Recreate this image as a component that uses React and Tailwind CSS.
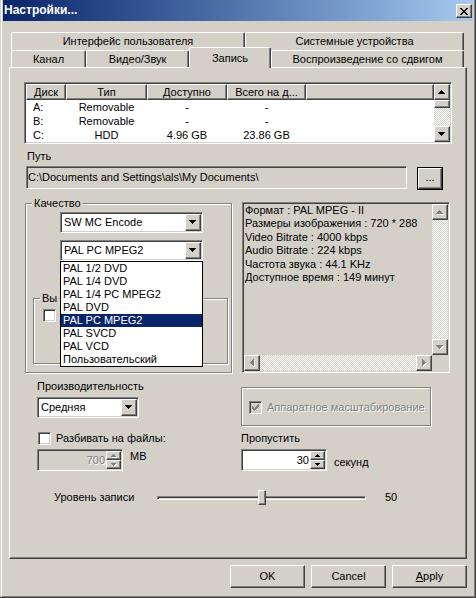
const raised =
  "border border-t-white border-l-white border-r-[#404040] border-b-[#404040] shadow-[inset_-1px_-1px_0_#808080]"
const sunken =
  "border border-t-[#808080] border-l-[#808080] border-r-white border-b-white shadow-[inset_1px_1px_0_#404040,inset_-1px_-1px_0_#d4d0c8]"
const etched = "border border-[#808080] shadow-[1px_1px_0_#fff,inset_1px_1px_0_#fff]"
const dither =
  "bg-[image:repeating-conic-gradient(#ffffff_0%_25%,#d4d0c8_0%_50%)] bg-[length:2px_2px]"
const grayText = "text-[#808080] [text-shadow:1px_1px_0_#fff]"

const Tri = ({ dir = "down", size = 7, disabled = false }) => {
  const s = size
  const h = Math.ceil(s / 2)
  const horiz = dir === "left" || dir === "right"
  const w = horiz ? h : s
  const ht = horiz ? s : h
  const pts = {
    down: `0,0 ${s},0 ${s / 2},${h}`,
    up: `${s / 2},0 ${s},${h} 0,${h}`,
    left: `${h},0 ${h},${s} 0,${s / 2}`,
    right: `0,0 ${h},${s / 2} 0,${s}`,
  }[dir]
  return (
    <svg width={w + 1} height={ht + 1} shapeRendering="crispEdges">
      {disabled && <polygon points={pts} fill="#fff" transform="translate(1,1)" />}
      <polygon points={pts} fill={disabled ? "#808080" : "#000"} />
    </svg>
  )
}

const Btn = ({ className = "", children }) => (
  <div className={`${raised} bg-[#d4d0c8] flex items-center justify-center shrink-0 ${className}`}>
    {children}
  </div>
)

const CheckMark = ({ color = "#000" }) => (
  <svg width="7" height="7" shapeRendering="crispEdges">
    <path
      fill={color}
      d="M6 0h1v1h-1z M5 1h2v1h-2z M0 2h1v1h-1z M4 2h3v1h-3z M0 3h2v1h-2z M3 3h3v1h-3z M0 4h5v1h-5z M1 5h3v1h-3z M2 6h1v1h-1z"
    />
  </svg>
)

const Check = ({ checked, disabled }) => (
  <div
    className={`${sunken} w-[13px] h-[13px] shrink-0 flex items-center justify-center ${
      disabled ? "bg-[#d4d0c8]" : "bg-white"
    }`}
  >
    {checked && <CheckMark color={disabled ? "#808080" : "#000"} />}
  </div>
)

const Combo = ({ value, className = "" }) => (
  <div className={`${sunken} bg-white h-[21px] flex items-stretch p-[1px] ${className}`}>
    <span className="flex-1 pl-[2px] self-center truncate">{value}</span>
    <Btn className="w-[16px]">
      <Tri />
    </Btn>
  </div>
)

const Spin = ({ value, disabled }) => (
  <div
    className={`${sunken} w-[86px] h-[22px] shrink-0 flex p-[1px] ${
      disabled ? "bg-[#d4d0c8]" : "bg-white"
    }`}
  >
    <span className={`flex-1 text-right pr-[1px] self-center ${disabled ? grayText : ""}`}>{value}</span>
    <div className="w-[15px] flex flex-col">
      <Btn className="flex-1">
        <Tri dir="up" size={5} disabled={disabled} />
      </Btn>
      <Btn className="flex-1">
        <Tri dir="down" size={5} disabled={disabled} />
      </Btn>
    </div>
  </div>
)

const Tab = ({ className = "", active, children }) => (
  <div
    className={`${className} ${
      active ? "h-[21px] -mb-[1px] relative z-10" : "h-full"
    } shrink-0 flex items-center justify-center bg-[#d4d0c8] border-t border-l border-r border-t-white border-l-white border-r-[#404040] shadow-[inset_-1px_0_0_#808080] rounded-t-[2px]`}
  >
    {children}
  </div>
)

const drives = [
  ["A:", "Removable", "-", "-"],
  ["B:", "Removable", "-", "-"],
  ["C:", "HDD", "4.96 GB", "23.86 GB"],
]

const formats = [
  "PAL 1/2 DVD",
  "PAL 1/4 DVD",
  "PAL 1/4 PC MPEG2",
  "PAL DVD",
  "PAL PC MPEG2",
  "PAL SVCD",
  "PAL VCD",
  "Пользовательский",
]

const info = [
  "Формат : PAL MPEG - II",
  "Размеры изображения : 720 * 288",
  "Video Bitrate : 4000 kbps",
  "Audio Bitrate : 224 kbps",
  "Частота звука : 44.1 KHz",
  "Доступное время : 149 минут",
]

export default function App() {
  return (
    <div className="w-[476px] h-[598px] bg-[#d4d0c8] border-r border-b border-[#404040] font-['Liberation_Sans',Arial,sans-serif] text-[11px] leading-[13px] text-black select-none">
      <div className="h-full ml-[1px] border-l border-r border-b border-l-white border-r-[#808080] border-b-[#808080] px-[1px] pb-[1px] flex flex-col">
        {/* title bar */}
        <div className="h-[21px] shrink-0 flex items-start bg-linear-to-r from-[#0a246a] to-[#a6caf0]">
          <span className="pl-[1px] pt-[3px] font-bold text-white text-[12px] leading-[14px]">Настройки...</span>
          <Btn className="ml-auto mt-[4px] mr-[1px] w-[16px] h-[14px]">
            <svg width="8" height="7" shapeRendering="crispEdges">
              <path d="M0 0H2L4 2.5L6 0H8L5 3.5L8 7H6L4 4.5L2 7H0L3 3.5Z" fill="#000" />
            </svg>
          </Btn>
        </div>

        {/* tabs */}
        <div className="mt-[11px] ml-[8px] flex h-[18px]">
          <Tab className="w-[234px]">Интерфейс пользователя</Tab>
          <Tab className="w-[219px]">Системные устройства</Tab>
        </div>
        <div className="ml-[8px] flex items-end h-[17px]">
          <Tab className="w-[75px]">Канал</Tab>
          <Tab className="w-[103px]">Видео/Звук</Tab>
          <Tab className="w-[82px]" active>
            Запись
          </Tab>
          <Tab className="w-[193px]">Воспроизведение со сдвигом</Tab>
        </div>

        {/* panel */}
        <div className="ml-[6px] w-[458px] h-[492px] shrink-0 border border-t-white border-l-white border-r-[#404040] border-b-[#404040] shadow-[inset_-1px_-1px_0_#808080] flex flex-col">
          {/* drive list */}
          <div className={`${sunken} ml-[14px] mt-[14px] w-[428px] h-[62px] bg-white flex p-[1px]`}>
            <div className="flex-1 flex flex-col">
              <div className="flex h-[16px]">
                <Btn className="w-[40px]">Диск</Btn>
                <Btn className="w-[81px]">Тип</Btn>
                <Btn className="w-[80px]">Доступно</Btn>
                <Btn className="w-[79px]">Всего на д...</Btn>
                <Btn className="flex-1" />
              </div>
              {drives.map((d) => (
                <div key={d[0]} className="flex h-[14px] items-center">
                  <span className="w-[40px] pl-[7px]">{d[0]}</span>
                  <span className="w-[81px] text-center">{d[1]}</span>
                  <span className="w-[80px] text-center">{d[2]}</span>
                  <span className="w-[79px] text-center">{d[3]}</span>
                </div>
              ))}
            </div>
            <div className="w-[16px] flex flex-col">
              <Btn className="h-[16px]">
                <Tri dir="up" />
              </Btn>
              <Btn className="h-[8px]" />
              <div className={`flex-1 ${dither}`} />
              <Btn className="h-[16px]">
                <Tri dir="down" />
              </Btn>
            </div>
          </div>

          {/* path */}
          <div className="ml-[17px] mt-[6px] h-[13px]">Путь</div>
          <div className="flex items-start mt-[3px] h-[24px]">
            <div className={`${sunken} ml-[16px] w-[381px] h-[23px] bg-[#d4d0c8] flex items-center px-[1px]`}>
              C:\Documents and Settings\als\My Documents\
            </div>
            <div className="ml-[10px] mt-[1px] w-[26px] h-[23px] border border-black flex">
              <Btn className="flex-1 pb-[2px]">...</Btn>
            </div>
          </div>

          {/* quality + info */}
          <div className="flex items-start mt-[12px]">
            <div className={`${etched} relative ml-[15px] mt-[1px] w-[207px] h-[170px] flex flex-col`}>
              <span className="absolute -top-[7px] left-[6px] px-[2px] bg-[#d4d0c8]">Качество</span>
              <Combo value="SW MC Encode" className="ml-[34px] mt-[8px] w-[143px]" />
              <div className="relative ml-[34px] mt-[7px] w-[143px] z-20">
                <Combo value="PAL PC MPEG2" />
                <div className="absolute top-full left-0 w-[143px] bg-white border border-black flex flex-col">
                  {formats.map((f) => (
                    <div
                      key={f}
                      className={`h-[13px] pl-[2px] whitespace-nowrap ${
                        f === "PAL PC MPEG2" ? "bg-[#0a246a] text-white" : ""
                      }`}
                    >
                      {f}
                    </div>
                  ))}
                </div>
              </div>
              <div className={`${etched} relative ml-[7px] mt-[37px] w-[195px] h-[66px]`}>
                <span className="absolute -top-[7px] left-[6px] px-[2px] bg-[#d4d0c8]">Вы</span>
                <div className="ml-[9px] mt-[10px]">
                  <Check />
                </div>
              </div>
            </div>

            <div className={`${sunken} ml-[10px] w-[208px] h-[171px] bg-[#d4d0c8] flex flex-col p-[1px]`}>
              <div className="flex h-[151px]">
                <div className="flex-1 pl-[1px] leading-[13.4px] whitespace-nowrap overflow-hidden">
                  {info.map((l) => (
                    <div key={l}>{l}</div>
                  ))}
                </div>
                <div className="w-[16px] flex flex-col">
                  <Btn className="h-[16px]">
                    <Tri dir="up" disabled />
                  </Btn>
                  <div className={`flex-1 ${dither}`} />
                  <Btn className="h-[16px]">
                    <Tri dir="down" disabled />
                  </Btn>
                </div>
              </div>
              <div className="flex h-[16px]">
                <Btn className="w-[16px]">
                  <Tri dir="left" disabled />
                </Btn>
                <div className={`flex-1 ${dither}`} />
                <Btn className="w-[16px]">
                  <Tri dir="right" disabled />
                </Btn>
                <div className="w-[16px]" />
              </div>
            </div>
          </div>

          {/* performance + hardware */}
          <div className="flex items-start mt-[7px]">
            <div className="ml-[27px] w-[204px] flex flex-col">
              <div className="h-[13px]">Производительность</div>
              <Combo value="Средняя" className="mt-[4px] w-[102px]" />
            </div>
            <div className={`${etched} mt-[7px] w-[190px] h-[39px] flex items-center pl-[7px] pt-[1px]`}>
              <Check checked disabled />
              <span className={`ml-[5px] ${grayText}`}>Аппаратное масштабирование</span>
            </div>
          </div>

          <div className="flex items-center mt-[6px] h-[13px]">
            <div className="ml-[28px] w-[203px] flex items-center">
              <Check />
              <span className="ml-[5px]">Разбивать на файлы:</span>
            </div>
            <span>Пропустить</span>
          </div>

          <div className="flex items-start mt-[4px]">
            <div className="ml-[27px] w-[204px] flex items-start">
              <Spin value="700" disabled />
              <span className="ml-[7px] mt-[1px]">MB</span>
            </div>
            <div className="flex items-end">
              <Spin value="30" />
              <span className="ml-[7px] mb-[2px]">секунд</span>
            </div>
          </div>

          {/* level slider */}
          <div className="flex items-center mt-[19px] h-[15px]">
            <span className="ml-[44px] w-[103px]">Уровень записи</span>
            <div className="relative w-[209px] h-[15px] flex items-center">
              <div className={`${sunken} w-full h-[4px]`} />
              <Btn className="absolute left-[101px] top-0 w-[8px] h-[15px]" />
            </div>
            <span className="ml-[19px]">50</span>
          </div>
        </div>

        {/* dialog buttons */}
        <div className="flex justify-end gap-[6px] pr-[6px] mt-[6px]">
          <Btn className="w-[75px] h-[23px]">OK</Btn>
          <Btn className="w-[75px] h-[23px]">Cancel</Btn>
          <Btn className="w-[75px] h-[23px]">
            <span>
              <span className="underline">A</span>pply
            </span>
          </Btn>
        </div>
      </div>
    </div>
  )
}
